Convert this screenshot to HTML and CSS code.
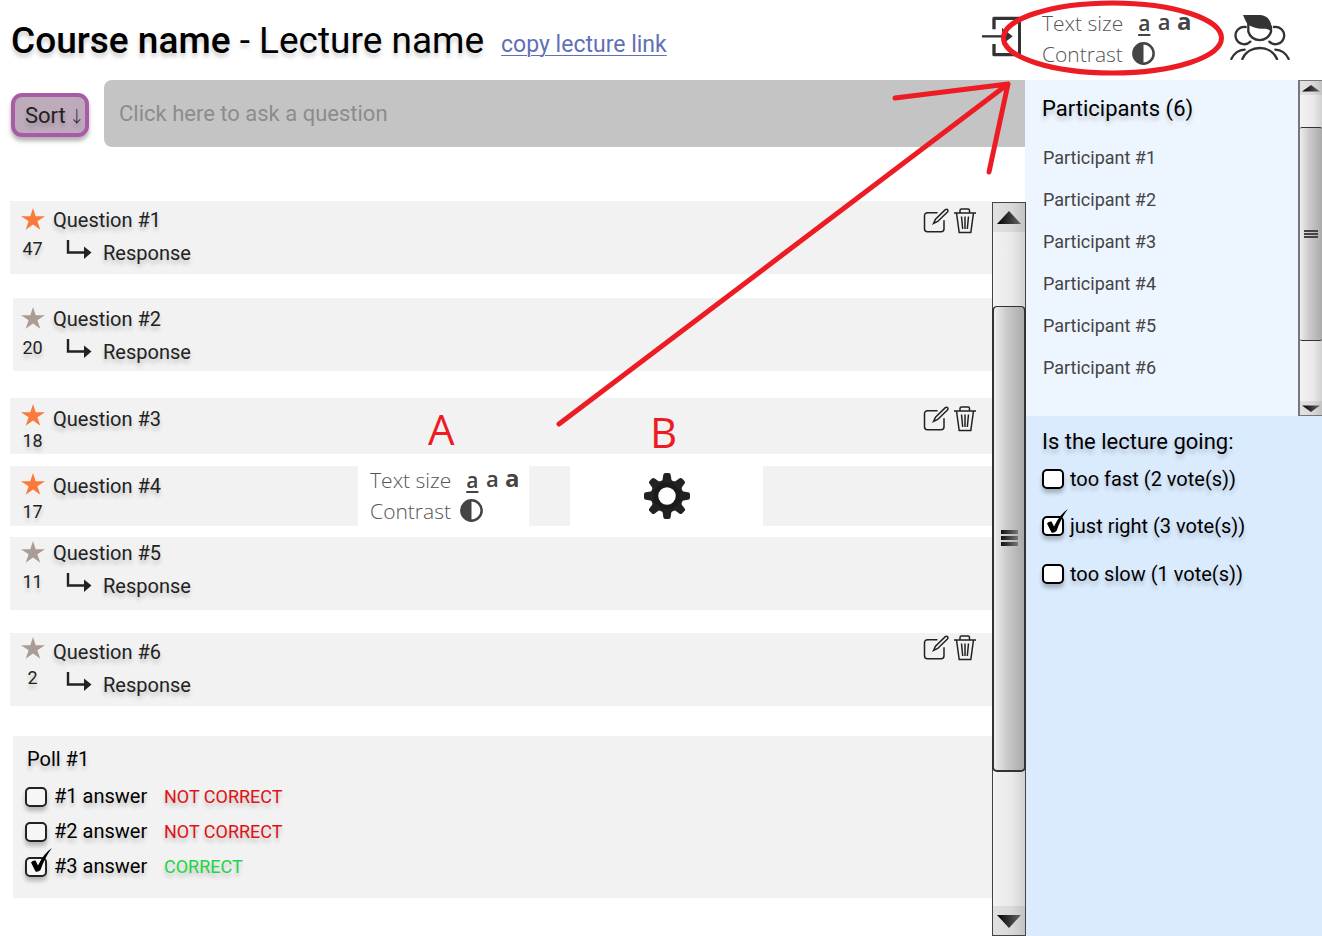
FILE: index.html
```html
<!DOCTYPE html>
<html lang="en">
<head>
<meta charset="utf-8">
<meta name="viewport" content="width=device-width, initial-scale=1">
<title>Course name - Lecture name</title>
<link rel="stylesheet" href="styles.css">
</head>
<body>
<svg class="defs" aria-hidden="true">
  <defs>
    <linearGradient id="dark" x1="0" y1="0" x2="1" y2="0"><stop offset="0" stop-color="#000"/><stop offset="1" stop-color="#666"/></linearGradient>
    <symbol id="star" viewBox="0 0 24 22"><path d="M12 0l2.700 8.300H24l-7.600 5 2.900 8.500L12 16.600l-7.300 5.200 2.900-8.500L0 8.300h9.300z"/></symbol>
    <symbol id="reply" viewBox="0 0 26 20"><path d="M2 0v12.500h17" fill="none" stroke="currentColor" stroke-width="2.400"/><path d="M18 6.500l7.500 6-7.500 6.500z"/></symbol>
    <symbol id="edit" viewBox="0 0 26 26"><g fill="none" stroke="currentColor" stroke-width="1.500"><path d="M14.500 4.700H4.500a3 3 0 0 0-3 3v13a3 3 0 0 0 3 3h13.500a3 3 0 0 0 3-3v-8.500"/><path d="M10.500 15.500l2-4.300L22.300 1.700q1.500-1 2.300 0t-.2 2.300L14.700 13.500z"/></g></symbol>
    <symbol id="trash" viewBox="0 0 24 26"><g fill="none" stroke="currentColor" stroke-width="1.500"><path d="M1 5h22M7 5V2.500Q7 1 8.500 1h6.500Q16.500 1 16.500 2.500V5M3.500 5l2.700 19.500h11.600L20.500 5M8.500 8.500l1.200 12.500M12 8.500V21M15.500 8.500L14.300 21"/></g></symbol>
    <symbol id="contrast" viewBox="0 0 22 22"><circle cx="11" cy="11" r="9.700" fill="#fff" stroke="currentColor" stroke-width="2.400"/><path d="M11 1a10 10 0 0 0 0 20z"/></symbol>
    <symbol id="up" viewBox="0 0 24 14"><path d="M12 0l12 13H0z" fill="url(#dark)"/></symbol>
    <symbol id="down" viewBox="0 0 24 14"><path d="M12 14L0 1h24z" fill="url(#dark)"/></symbol>
    <symbol id="check" viewBox="0 0 22 24"><path d="M1 14.500q2-2.500 4.500-2l2.500 5Q14 5 22 0q-7 9-11.500 22-2.500 2.500-5 1.500z"/></symbol>
  </defs>
</svg>

<div class="app">
  <header class="top">
    <h1 class="title"><b>Course name</b> - Lecture name</h1>
    <a class="copy" href="#lecture">copy lecture link</a>
    <button class="icon-button exit" aria-label="Leave lecture">
      <svg width="39" height="42" viewBox="0 0 117 126"><g fill="none" stroke="currentColor" stroke-width="10"><path d="M36 40V7h77v109H36V84" stroke-linejoin="round"/><path d="M0 61h80" stroke-width="7"/></g><path d="M60 36l32 25-32 25V67h10v-12H60z" fill="currentColor"/></svg>
    </button>
  </header>
  <div class="top-side">
    <div class="display-options">
      <div class="option-line"><span>Text size</span><button class="size small">a</button><button class="size medium">a</button><button class="size large">a</button></div>
      <div class="option-line"><span>Contrast</span><button class="icon-button contrast" aria-label="Contrast"><svg width="23" height="23"><use href="#contrast"/></svg></button></div>
    </div>
    <button class="icon-button people" aria-label="Participants">
      <svg width="60" height="46" viewBox="0 0 180 138"><g fill="none" stroke="currentColor" stroke-width="7" stroke-linecap="round"><path d="M55 25v28a35 33 0 0 0 68 0V38"/><path d="M47 39A26 26 0 1 0 61 83M132 39A26 26 0 1 1 118 83"/><path d="M37 135C56 91 122 91 141 135"/><path d="M4 135Q17 108 44 107M176 135Q163 108 136 107"/></g><path d="M39 3h52q35 3 35 50-10-7-18-9-34 3-56-14Q46 20 39 3z" fill="currentColor"/></svg>
    </button>
  </div>

  <main class="main">
    <div class="ask-bar">
      <button class="sort">Sort <span class="arrow">↓</span></button>
      <input class="ask" type="text" aria-label="Ask a question" placeholder="Click here to ask a question">
    </div>
    <div class="feed-area">
      <div class="feed">
        <article class="question">
          <div class="votes"><svg class="star on"><use href="#star"/></svg><span>47</span></div>
          <div class="texts"><p>Question #1</p><p class="response"><svg class="reply"><use href="#reply"/></svg>Response</p></div>
          <div class="actions"><button class="icon-button" aria-label="Edit"><svg width="26" height="26"><use href="#edit"/></svg></button><button class="icon-button" aria-label="Delete"><svg width="24" height="26"><use href="#trash"/></svg></button></div>
        </article>
        <article class="question inset">
          <div class="votes"><svg class="star"><use href="#star"/></svg><span>20</span></div>
          <div class="texts"><p>Question #2</p><p class="response"><svg class="reply"><use href="#reply"/></svg>Response</p></div>
        </article>
        <article class="question single">
          <div class="votes"><svg class="star on"><use href="#star"/></svg><span>18</span></div>
          <div class="texts"><p>Question #3</p></div>
          <div class="actions"><button class="icon-button" aria-label="Edit"><svg width="26" height="26"><use href="#edit"/></svg></button><button class="icon-button" aria-label="Delete"><svg width="24" height="26"><use href="#trash"/></svg></button></div>
        </article>
        <article class="question single with-options">
          <div class="votes"><svg class="star on"><use href="#star"/></svg><span>17</span></div>
          <div class="texts"><p>Question #4</p></div>
          <div class="panel panel-display">
            <div class="display-options">
              <div class="option-line"><span>Text size</span><button class="size small">a</button><button class="size medium">a</button><button class="size large">a</button></div>
              <div class="option-line"><span>Contrast</span><button class="icon-button contrast" aria-label="Contrast"><svg width="23" height="23"><use href="#contrast"/></svg></button></div>
            </div>
          </div>
          <div class="panel panel-gear">
            <button class="icon-button" aria-label="Settings">
              <svg width="46" height="46" viewBox="-23 -23 46 46" fill="#1a1a1a"><defs><path id="tooth" d="M-6-13Q-4-16-3.700-21q.2-2 2-2h3.400q1.800 0 2 2Q4-16 6-13z"/></defs><circle r="12.500" fill="none" stroke="#1a1a1a" stroke-width="7.500"/><use href="#tooth"/><use href="#tooth" transform="rotate(45)"/><use href="#tooth" transform="rotate(90)"/><use href="#tooth" transform="rotate(135)"/><use href="#tooth" transform="rotate(180)"/><use href="#tooth" transform="rotate(225)"/><use href="#tooth" transform="rotate(270)"/><use href="#tooth" transform="rotate(315)"/></svg>
            </button>
          </div>
        </article>
        <article class="question tight">
          <div class="votes"><svg class="star"><use href="#star"/></svg><span>11</span></div>
          <div class="texts"><p>Question #5</p><p class="response"><svg class="reply"><use href="#reply"/></svg>Response</p></div>
        </article>
        <article class="question last">
          <div class="votes"><svg class="star"><use href="#star"/></svg><span>2</span></div>
          <div class="texts"><p>Question #6</p><p class="response"><svg class="reply"><use href="#reply"/></svg>Response</p></div>
          <div class="actions"><button class="icon-button" aria-label="Edit"><svg width="26" height="26"><use href="#edit"/></svg></button><button class="icon-button" aria-label="Delete"><svg width="24" height="26"><use href="#trash"/></svg></button></div>
        </article>
        <section class="poll">
          <h2>Poll #1</h2>
          <div class="answer"><label class="tick"><input type="checkbox"><span>#1 answer</span></label><span class="wrong">NOT CORRECT</span></div>
          <div class="answer"><label class="tick"><input type="checkbox"><span>#2 answer</span></label><span class="wrong">NOT CORRECT</span></div>
          <div class="answer"><label class="tick"><input type="checkbox" checked><svg class="check"><use href="#check"/></svg><span>#3 answer</span></label><span class="right">CORRECT</span></div>
        </section>
      </div>
      <div class="scrollbar wide" aria-hidden="true">
        <div class="cap"><svg width="24" height="14"><use href="#up"/></svg></div>
        <div class="before"></div>
        <div class="thumb"><i></i><i></i><i></i></div>
        <div class="after"></div>
        <div class="cap"><svg width="24" height="14"><use href="#down"/></svg></div>
      </div>
    </div>
  </main>

  <aside class="side">
    <section class="participants">
      <div class="people-list">
        <h2>Participants (6)</h2>
        <ul>
          <li>Participant #1</li>
          <li>Participant #2</li>
          <li>Participant #3</li>
          <li>Participant #4</li>
          <li>Participant #5</li>
          <li>Participant #6</li>
        </ul>
      </div>
      <div class="scrollbar narrow" aria-hidden="true">
        <div class="cap"><svg width="18" height="7" preserveAspectRatio="none" viewBox="0 0 24 14"><path d="M12 0l12 13H0z" fill="url(#dark)"/></svg></div>
        <div class="before"></div>
        <div class="thumb"><i></i><i></i><i></i></div>
        <div class="after"></div>
        <div class="cap"><svg width="18" height="7" preserveAspectRatio="none" viewBox="0 0 24 14"><path d="M12 14L0 1h24z" fill="url(#dark)"/></svg></div>
      </div>
    </section>
    <fieldset class="pace">
      <legend>Is the lecture going:</legend>
      <label class="tick"><input type="checkbox"><span>too fast (2 vote(s))</span></label>
      <label class="tick"><input type="checkbox" checked><svg class="check"><use href="#check"/></svg><span>just right (3 vote(s))</span></label>
      <label class="tick"><input type="checkbox"><span>too slow (1 vote(s))</span></label>
    </fieldset>
  </aside>
</div>

<svg class="markup" width="1322" height="480" viewBox="0 0 1322 480">
  <g fill="none" stroke="#ed1c24" stroke-width="5" stroke-linecap="round" stroke-linejoin="round">
    <ellipse cx="1112.500" cy="38" rx="109" ry="35"/>
    <path d="M559 424L1008 84M895 98L1008 84L989 172"/>
  </g>
  <text x="428" y="445">A</text>
  <text x="650" y="448">B</text>
</svg>
</body>
</html>
```
FILE: styles.css
```css
* { box-sizing: border-box; }

body {
  margin: 0;
  background: #fff;
  color: #222;
  font-family: Roboto, "Liberation Sans", sans-serif;
  font-size: 20px;
}

h1, h2, p, ul { margin: 0; padding: 0; font-weight: 400; }
ul { list-style: none; }
button, input { font: inherit; color: inherit; }
.defs { position: absolute; width: 0; height: 0; }
svg { display: block; fill: currentColor; flex: none; }

.app {
  display: grid;
  grid-template-columns: minmax(0, 1fr) 297px;
  grid-template-rows: 80px 1fr;
  min-height: 100vh;
}

.icon-button {
  display: block;
  padding: 0;
  border: 0;
  background: none;
  cursor: pointer;
}

.top { display: flex; align-items: center; padding: 0 4px 0 11px; }
.title {
  color: #000;
  font-size: 37px;
  line-height: 80px;
  padding-top: 2px;
  white-space: nowrap;
  text-shadow: 0 4px 4px rgba(0, 0, 0, .2);
}
.title b { font-weight: 500; }
.copy {
  margin: 8px 0 0 17px;
  color: #6270b5;
  font-size: 23px;
  white-space: nowrap;
  text-decoration-thickness: 1px;
  text-underline-offset: 3px;
}
.exit { margin-left: auto; color: #333; margin-bottom: 6px; }

.top-side { display: flex; align-items: flex-start; padding: 7px 32px 0 17px; }
.people { margin: 7px 0 0 auto; color: #333; }

.display-options {
  color: #555;
  font-family: "Open Sans", "Noto Sans", sans-serif;
  font-size: 21px;
  font-weight: 300;
}
.option-line { display: flex; align-items: center; height: 31px; white-space: nowrap; }
.size {
  width: 20px;
  padding: 0;
  border: 0;
  background: none;
  color: #444;
  font-weight: 600;
  line-height: 30px;
  text-align: center;
}
.small { margin-left: 11px; text-decoration: underline; text-decoration-thickness: 2px; text-underline-offset: 3px; }
.medium, .large { padding-bottom: 3px; }
.medium { font-size: 22px; }
.large { font-size: 24px; font-weight: 700; }
.contrast { margin-left: 9px; color: #444; }

.main { display: flex; flex-direction: column; min-width: 0; }
.ask-bar { display: flex; align-items: center; gap: 15px; padding-left: 11px; }
.sort {
  display: flex;
  align-items: center;
  gap: 3px;
  width: 78px;
  height: 44px;
  margin-top: 3px;
  padding: 0 0 0 10px;
  border: 4px solid #aa5ba5;
  border-radius: 11px;
  background: #bdabbc;
  font-size: 22px;
  white-space: nowrap;
  text-shadow: 0 4px 4px rgba(0, 0, 0, .2);
  box-shadow: 0 4px 4px rgba(0, 0, 0, .3);
}
.arrow { font-family: "Noto Sans CJK JP", sans-serif; font-size: 16px; font-weight: 300; }
.ask {
  flex: 1;
  min-width: 0;
  height: 67px;
  padding: 0 15px;
  border: 0;
  border-radius: 8px 0 0 8px;
  background: #c4c4c4;
  font-size: 22px;
}
.ask::placeholder { color: #8c8c8c; opacity: 1; }

.feed-area { display: flex; flex: 1; padding-top: 54px; }
.feed { flex: 1; min-width: 0; padding-left: 10px; }

.question {
  display: flex;
  min-height: 73px;
  margin-bottom: 24px;
  padding: 2px 15px 0 10px;
  background: #f2f2f2;
  text-shadow: 0 4px 4px rgba(0, 0, 0, .2);
}
.question.inset { margin-left: 3px; margin-bottom: 27px; padding: 4px 15px 0 7px; }
.question.single { min-height: 56px; margin-bottom: 12px; padding-top: 4px; }
.question.with-options { min-height: 60px; margin-bottom: 11px; padding-top: 3px; }
.question.tight { padding-top: 0; margin-bottom: 23px; }
.question.last { margin-bottom: 30px; }

.votes { display: flex; flex-direction: column; align-items: center; width: 33px; padding-right: 8px; font-size: 18px; line-height: 25px; }
.star { width: 24px; height: 22px; margin: 5px 0 6px; color: #ab9d96; }
.single .star { margin: 2px 0; }
.with-options .star { margin: 4px 0; }
.last .votes { margin-top: -3px; }
.tight .votes { margin-top: -1px; }
.votes .on { color: #fa7a3c; }
.texts { padding-top: 1px; line-height: 33px; white-space: nowrap; }
.tight .texts { padding: 0; }
.response { display: flex; padding-left: 13px; }
.reply { width: 26px; height: 20px; margin: 3px 11px 0 0; }
.actions { display: flex; gap: 4px; margin: 5px 0 0 auto; align-self: flex-start; }
.single .actions { margin-top: 4px; }
.last .actions { margin-top: 0; }

.panel { align-self: stretch; margin-top: -3px; background: #fff; text-shadow: none; }
.panel-display { width: 171px; margin-left: 197px; padding-left: 12px; }
.panel-display .display-options { margin-top: -2px; height: 60px; }
.panel-gear { display: flex; width: 193px; margin-left: 41px; align-items: center; justify-content: center; }

.poll {
  margin-left: 3px;
  padding: 8px 12px 14px;
  background: #f2f2f2;
  color: #000;
  text-shadow: 0 4px 4px rgba(0, 0, 0, .2);
}
.poll h2 { padding: 0 0 5px 2px; font-size: 20px; line-height: 30px; }
.answer { display: grid; grid-template-columns: 139px 1fr; line-height: 35px; }
.wrong, .right { font-size: 18px; }
.wrong { color: #e01216; }
.right { color: #1fd546; }

.tick { display: flex; position: relative; align-items: center; gap: 7px; white-space: nowrap; }
.tick input {
  appearance: none;
  width: 22px;
  height: 20px;
  margin: 0;
  border: 2px solid #222;
  border-radius: 5px;
  background: #f6f6f6;
  box-shadow: 0 4px 4px rgba(0, 0, 0, .25);
}
.check { position: absolute; left: 5px; bottom: 12px; width: 22px; height: 24px; color: #000; pointer-events: none; }

.side { display: flex; flex-direction: column; background: #daebfe; color: #000; }
.participants { display: flex; background: #edf5ff; }
.people-list { flex: 1; padding: 12px 17px 27px; white-space: nowrap; }
.people-list h2 { font-size: 22px; line-height: 34px; padding-bottom: 11px; text-shadow: 0 4px 4px rgba(0, 0, 0, .2); }
.people-list li { padding-left: 1px; color: #444; font-size: 18px; line-height: 42px; }

.pace { margin: 0; padding: 11px 17px; border: 0; text-shadow: 0 4px 4px rgba(0, 0, 0, .2); }
.pace legend { float: left; width: 100%; padding: 0; font-size: 22px; line-height: 30px; }
.pace .tick { clear: both; height: 48px; gap: 6px; }
.pace legend + .tick { height: 44px; margin-bottom: 1px; }
.pace input { border-color: #000; background: #fff; }
.pace .check { bottom: 17px; left: 4px; }

.scrollbar {
  display: flex;
  flex-direction: column;
  border: 1px solid #444;
  background: linear-gradient(90deg, #f3f3f3, #e9e9e9 60%, #d2d2d2);
}
.wide { z-index: 1; width: 34px; margin: 1px -1px 0 0; }
.narrow { width: 24px; border-width: 1px 0 1px 2px; border-color: #777; }
.cap {
  display: flex;
  height: 29px;
  align-items: center;
  justify-content: center;
  background: rgba(0, 0, 0, .07);
}
.narrow .cap { height: 14px; }
.before { flex: 74 0 0; }
.after { flex: 135 0 0; }
.thumb {
  display: flex;
  flex: 465 0 0;
  flex-direction: column;
  align-items: center;
  justify-content: center;
  gap: 2px;
  margin: 0 -1px;
  border: 2px solid #333;
  border-width: 1px 2px 2px;
  border-radius: 5px;
  background: linear-gradient(90deg, #eee, #ccc 40%, #aaa);
}
.thumb i { width: 17px; height: 4px; background: linear-gradient(90deg, #111, #777); }
.narrow .before { flex-grow: 32; }
.narrow .thumb { flex-grow: 214; gap: 1px; margin: 0; border-width: 1px 0; border-radius: 2px; }
.narrow .thumb i { width: 14px; height: 2px; background: #444; }
.narrow .after { flex-grow: 60; }

.markup { position: absolute; z-index: 2; top: 0; left: 0; max-width: 100%; pointer-events: none; }
.markup text { fill: #ed1c24; font: 42px "Open Sans", sans-serif; }
```
